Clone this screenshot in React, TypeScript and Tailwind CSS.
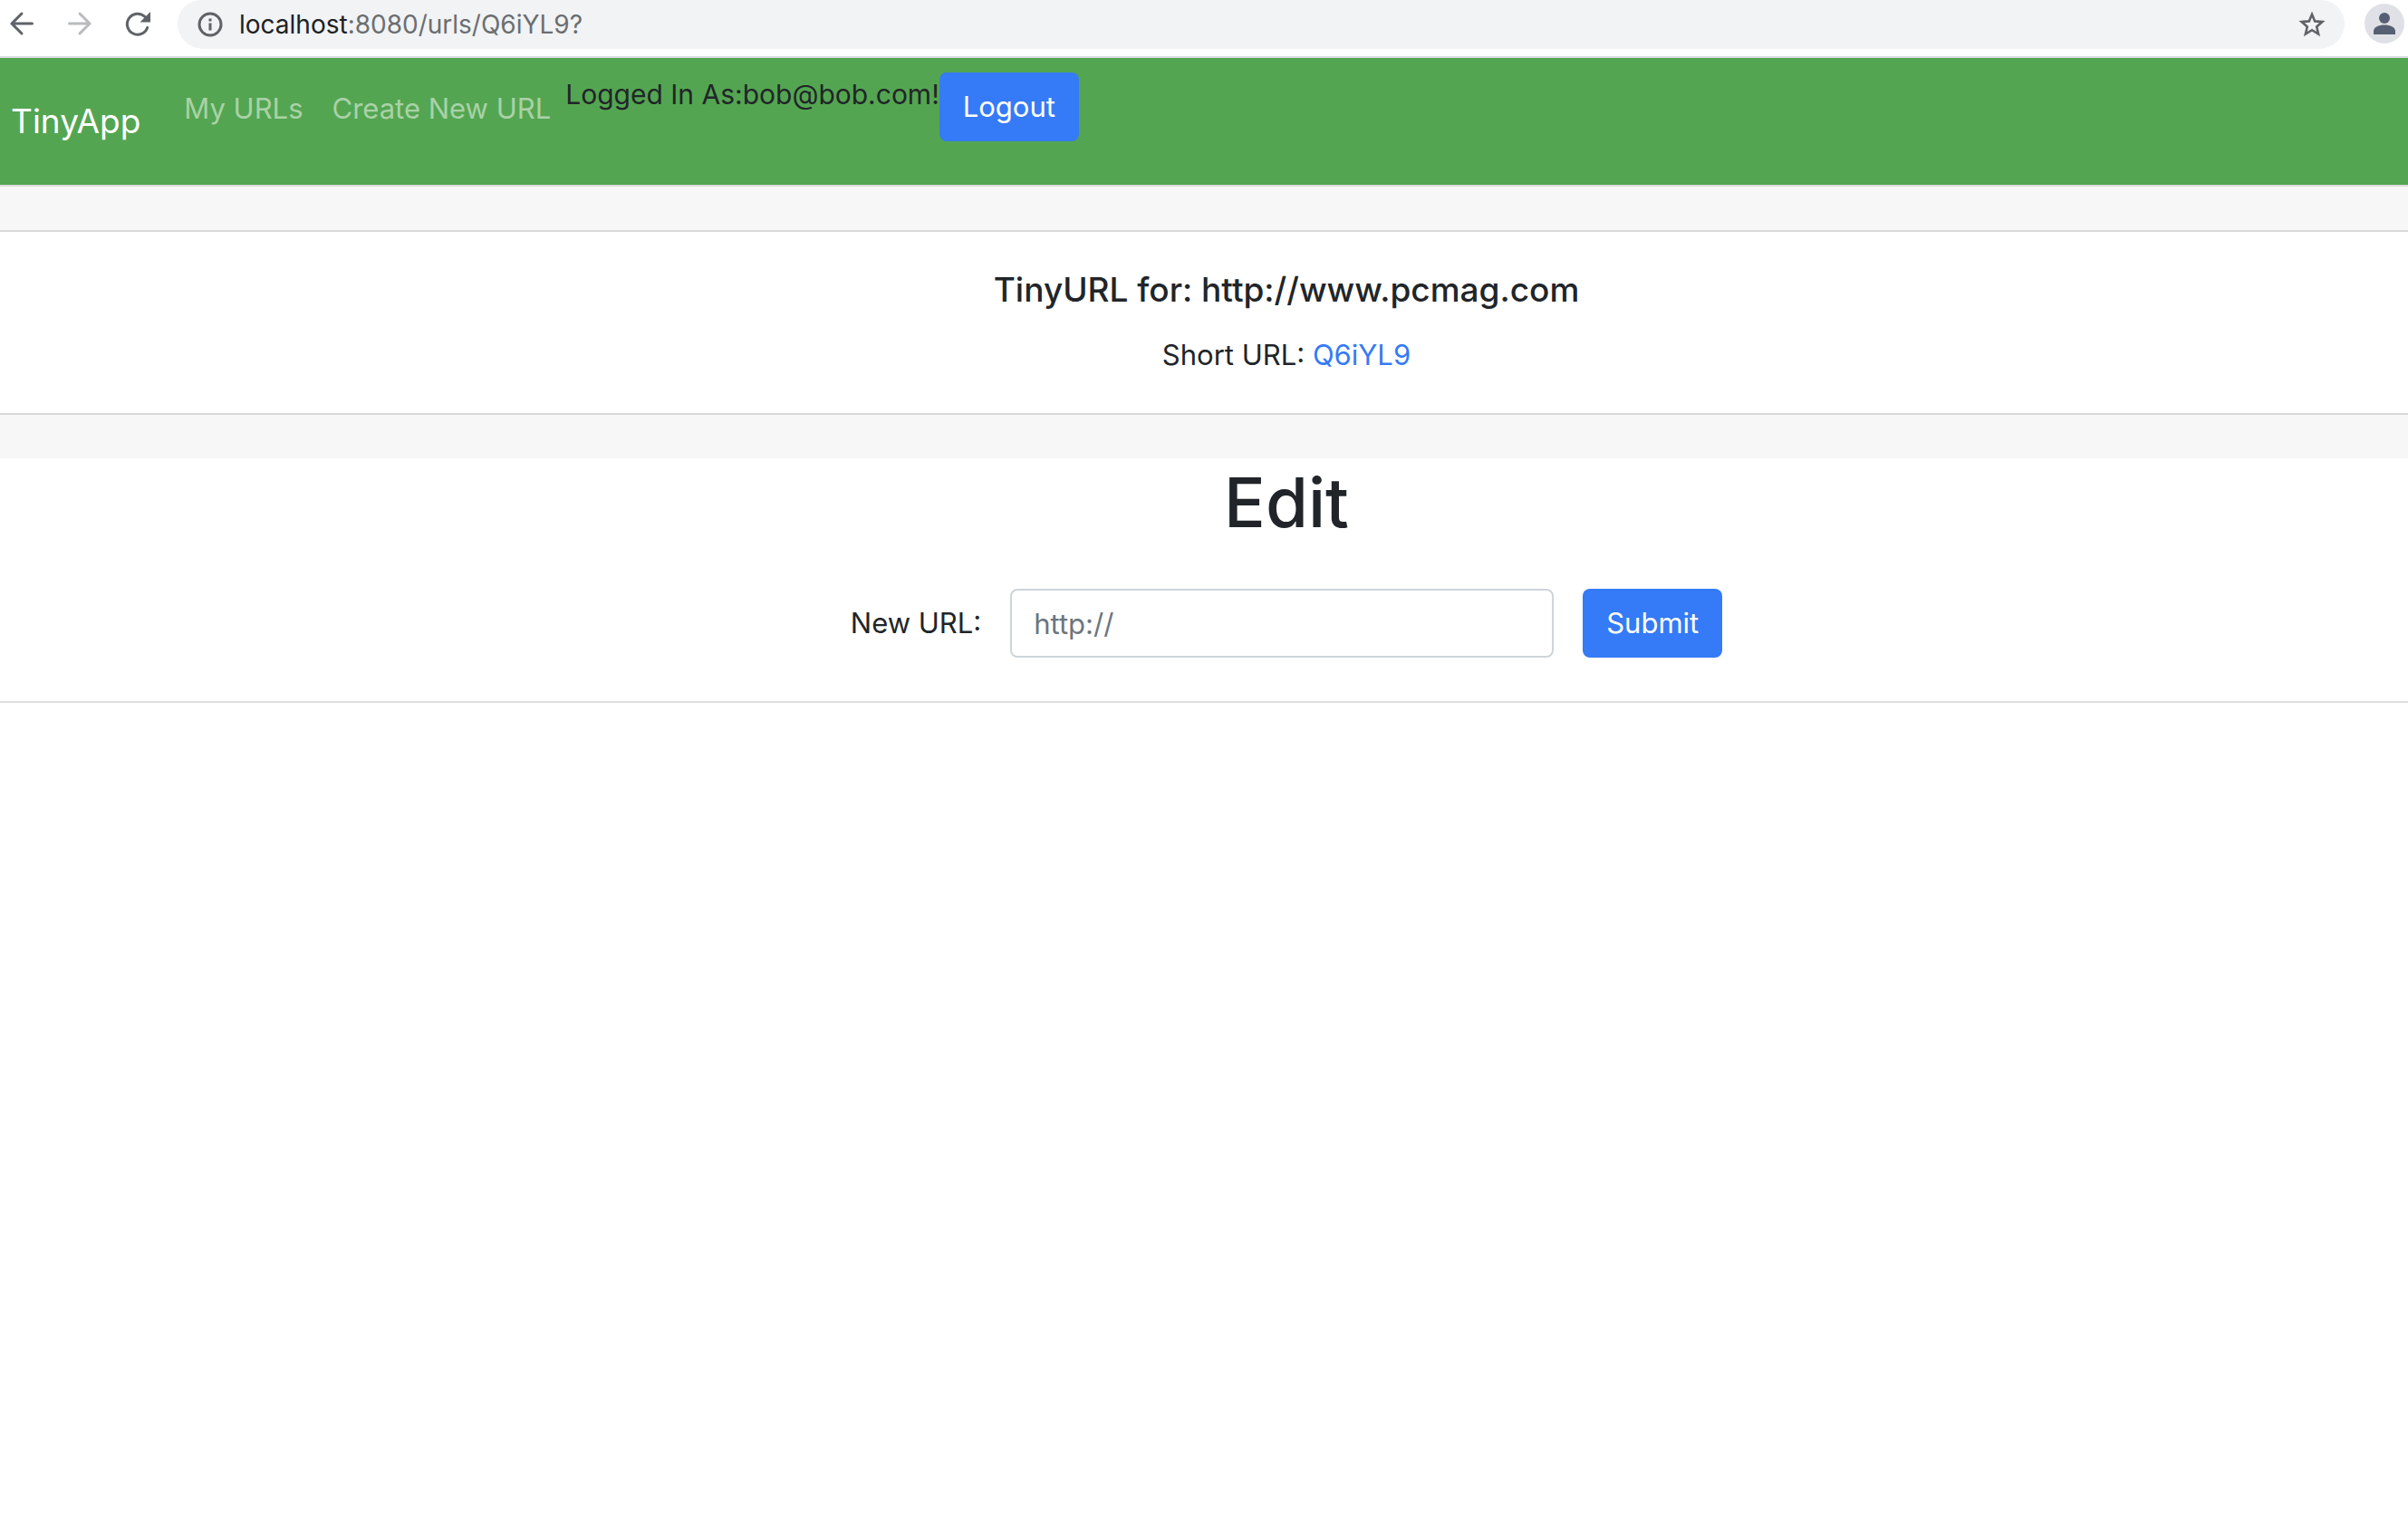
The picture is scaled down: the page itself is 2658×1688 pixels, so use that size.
import React from "react";

function BackIcon() {
  return (
    <svg viewBox="0 0 32 32" className="size-8" fill="none" stroke="currentColor" strokeWidth="3" strokeLinecap="round" aria-hidden="true">
      <path d="M27.500 16H5M16 5L5 16L16 27" />
    </svg>
  );
}

function ForwardIcon() {
  return (
    <svg viewBox="0 0 32 32" className="size-8" fill="none" stroke="currentColor" strokeWidth="3" strokeLinecap="round" aria-hidden="true">
      <path d="M4.500 16H27M16 5L27 16L16 27" />
    </svg>
  );
}

function ReloadIcon() {
  return (
    <svg viewBox="0 0 32 32" className="size-8" fill="none" aria-hidden="true">
      <path d="M26.700 20.500A11.500 11.500 0 1 1 24 8.500" stroke="currentColor" strokeWidth="3" strokeLinecap="round" />
      <path d="M30 3V14.500H18.500Z" fill="currentColor" />
    </svg>
  );
}

function InfoIcon() {
  return (
    <svg viewBox="0 0 28 28" className="size-7" fill="none" aria-hidden="true">
      <circle cx="14" cy="14" r="12" stroke="currentColor" strokeWidth="3" />
      <path d="M12.500 7.500h3v3h-3zM12.500 12.500h3v8h-3z" fill="currentColor" />
    </svg>
  );
}

function StarIcon() {
  return (
    <svg viewBox="0 0 32 32" className="size-8" fill="none" stroke="currentColor" strokeWidth="2.600" aria-hidden="true">
      <path d="M16 4.800L19.200 12.400L27.400 13.100L21.200 18.500L23.100 26.500L16 22.200L8.900 26.500L10.800 18.500L4.600 13.100L12.800 12.400Z" />
    </svg>
  );
}

function ProfileIcon() {
  return (
    <svg viewBox="0 0 44 44" className="size-11" aria-hidden="true">
      <circle cx="22" cy="22" r="22" fill="#dfe1e6" />
      <circle cx="22" cy="16" r="6" fill="#566072" />
      <path d="M10 34V30.500C10 26 16 23.500 22 23.500S34 26 34 30.500V34Z" fill="#566072" />
    </svg>
  );
}

function BrowserBar() {
  return (
    <div className="flex h-16 items-start border-b-2 border-[#dadce0] bg-white pl-2 pr-1 text-[#5f6368]">
      <div className="flex items-center gap-8 pt-[10px]">
        <button type="button" aria-label="Back"><BackIcon /></button>
        <button type="button" aria-label="Forward" className="text-[#b9bbbe]"><ForwardIcon /></button>
        <button type="button" aria-label="Reload"><ReloadIcon /></button>
      </div>
      <div className="ml-7 mr-[22px] flex h-[54px] flex-1 items-center rounded-b-[28px] rounded-t-[26px] bg-[#f1f3f4] pl-[22px] pr-5">
        <button type="button" aria-label="Site information"><InfoIcon /></button>
        <div className="flex-1 pl-[18px] text-[28px] leading-8 text-[#6b6e71]">
          <span className="text-[#202124]">localhost</span>:8080/urls/Q6iYL9?
        </div>
        <button type="button" aria-label="Bookmark this page"><StarIcon /></button>
      </div>
      <button type="button" aria-label="Profile" className="pt-1"><ProfileIcon /></button>
    </div>
  );
}

function NavBar() {
  return (
    <nav className="flex items-center border-b-2 border-[#dcdcdc] bg-[#54a551] py-4 pl-3">
      <a href="#home" className="mr-8 text-[37px] leading-[60px] text-white">TinyApp</a>
      <div className="flex items-start pb-7">
        <ul className="flex text-[#a9d2a7]">
          <li><a href="#urls" className="block px-4 py-4 leading-12">My URLs</a></li>
          <li><a href="#new" className="block px-4 py-4 leading-12">Create New URL</a></li>
        </ul>
        <span className="text-[30px] leading-12">Logged In As:bob@bob.com!</span>
        <button type="button" className="h-[76px] w-[154px] rounded-lg bg-[#357af6] text-white">Logout</button>
      </div>
    </nav>
  );
}

export default function App() {
  return (
    <div className="min-h-screen overflow-hidden bg-white font-['Inter',sans-serif] text-[31px] leading-12 text-[#212529]">
      <BrowserBar />
      <NavBar />
      <main className="text-center">
        <div className="bg-[#f7f7f7] py-12">
          <section className="border-y-2 border-[#d8d8d8] bg-white py-10 pl-[182px]">
            <h5 className="mb-6 text-[37px] font-medium leading-12">TinyURL for: http://www.pcmag.com</h5>
            <p>Short URL: <a href="#short" className="text-[#357af6]">Q6iYL9</a></p>
          </section>
        </div>
        <section className="border-b-2 border-[#dedede] pb-12 pl-[182px]">
          <h1 className="mb-12 text-[76px] font-medium leading-24">Edit</h1>
          <form className="flex items-center justify-center gap-8" onSubmit={(e) => e.preventDefault()}>
            <label htmlFor="new-url">New URL:</label>
            <input id="new-url" type="text" placeholder="http://" className="h-[76px] w-[600px] rounded-lg border-2 border-[#ced4da] px-6 placeholder:text-[#6c757d]" />
            <button type="submit" className="h-[76px] w-[154px] rounded-lg bg-[#357af6] text-white">Submit</button>
          </form>
        </section>
      </main>
    </div>
  );
}
